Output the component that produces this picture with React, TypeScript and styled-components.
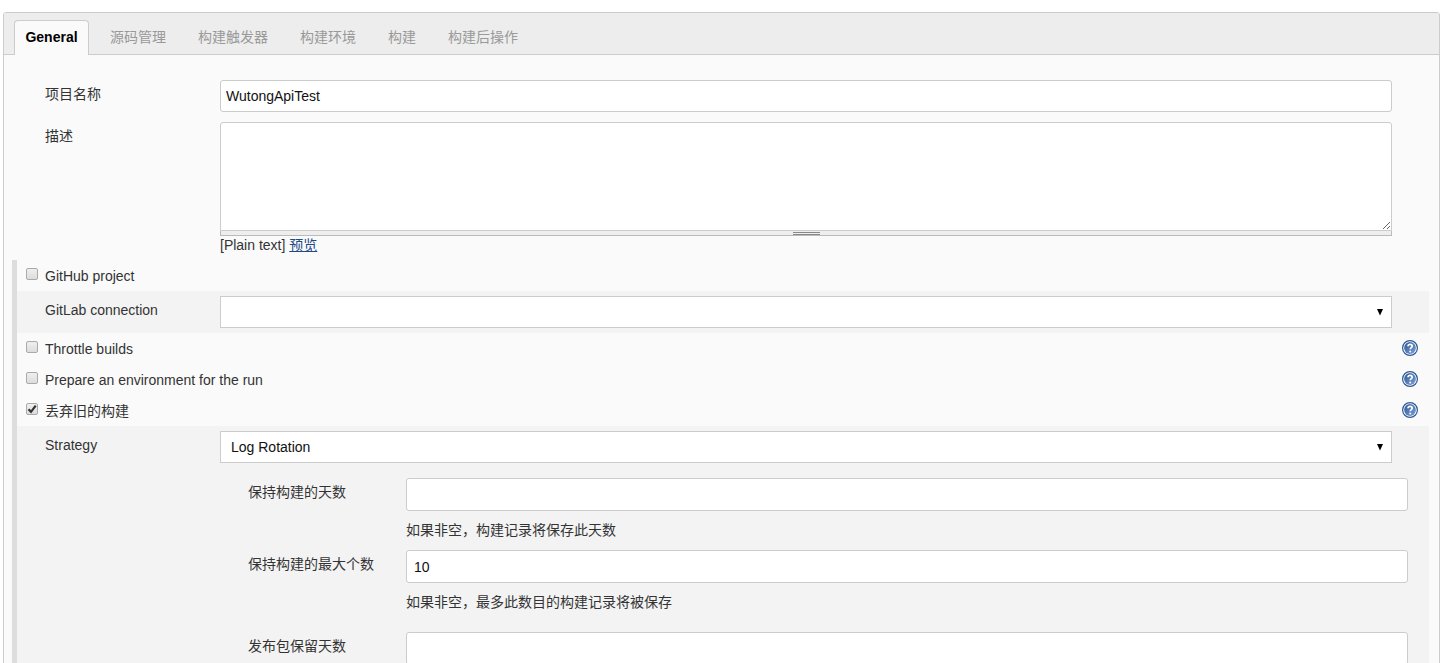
import React, { useId, useState } from "react";
import styled, { createGlobalStyle, css } from "styled-components";

const GlobalStyle = createGlobalStyle`
  *, *::before, *::after { box-sizing: border-box; }
  body { margin: 0; background: #fff; }
  body, button, input, textarea, select {
    font-family: "Liberation Sans", "Noto Sans CJK SC", sans-serif;
    font-size: 14px;
    line-height: 20px;
    color: #333;
  }
`;

const Page = styled.main`
  height: 100vh;
  overflow: hidden;
  padding: 12px 5px 0 3px;
`;

const Panel = styled.form`
  border: 1px solid #ccc;
  border-radius: 3px;
  background: #fafafa;
`;

const TabBar = styled.div`
  display: flex;
  align-items: flex-end;
  height: 42px;
  padding-left: 10px;
  border-bottom: 1px solid #ccc;
  border-radius: 2px 2px 0 0;
  background: #ededed;
`;

const Tab = styled.button<{ $active: boolean }>`
  height: 35px;
  margin-bottom: -1px;
  padding: 0 10px 3px;
  margin-right: 10px;
  border: 1px solid transparent;
  border-bottom: 0;
  border-radius: 4px 4px 0 0;
  background: transparent;
  color: #999;
  white-space: nowrap;
  ${(p) =>
    p.$active &&
    css`
      min-width: 75px;
      border-color: #ccc;
      background: #fafafa;
      color: #000;
      font-weight: bold;
    `}
`;

const Section = styled.section<{ $bar?: boolean }>`
  margin: 0 10px 0 8px;
  border-left: 5px solid ${(p) => (p.$bar ? "#ddd" : "transparent")};
`;

const Intro = styled(Section)`
  padding: 25px 0 6px;
  display: grid;
  row-gap: 10px;
`;

const SettingRow = styled.div<{ $shaded?: boolean }>`
  display: grid;
  grid-template-columns: 175px 1fr;
  padding: ${(p) => (p.$shaded ? "5px 37px 5px 28px" : "0 37px 0 28px")};
  background: ${(p) => (p.$shaded ? "#f3f3f3" : "transparent")};
`;

const Label = styled.label`
  padding-top: 4px;
`;

const TextInput = styled.input<{ $roomy?: boolean }>`
  display: block;
  width: 100%;
  height: ${(p) => (p.$roomy ? "33px" : "32px")};
  padding: 0 ${(p) => (p.$roomy ? "7px" : "5px")};
  border: 1px solid #ccc;
  border-radius: 3px;
  background: #fff;
  color: #111;
`;

const TextArea = styled.textarea`
  display: block;
  width: 100%;
  height: 109px;
  padding: 5px;
  border: 1px solid #ccc;
  border-radius: 3px 3px 0 0;
  background: #fff;
  resize: vertical;
`;

const Handle = styled.div`
  display: flex;
  justify-content: center;
  height: 5px;
  border: 1px solid #bbb;
  border-top: 0;
  background: #eee;
`;

const Grip = styled.span`
  width: 27px;
  height: 3px;
  margin-top: 1px;
  border: solid #888;
  border-width: 1px 0;
`;

const Format = styled.div`
  line-height: 18px;
`;

const Link = styled.a`
  color: #204a87;
  text-decoration: underline;
`;

const SelectBox = styled.div`
  position: relative;
`;

const Select = styled.select`
  display: block;
  width: 100%;
  height: 32px;
  padding: 0 24px 0 10px;
  border: 1px solid #ccc;
  border-radius: 0;
  background: #fff;
  color: #111;
  appearance: none;
`;

const Arrow = styled.svg`
  position: absolute;
  right: 9px;
  top: 12px;
  pointer-events: none;
`;

const OptionRow = styled.div`
  display: flex;
  align-items: flex-start;
  justify-content: space-between;
  height: 31px;
  padding: 6px 11px 0 9px;
`;

const OptionLabel = styled.label`
  display: flex;
  align-items: flex-start;
  gap: 7px;
`;

const Checkbox = styled.input`
  appearance: none;
  width: 12px;
  height: 12px;
  margin: 2px 0 0;
  border: 1px solid #aaa;
  border-radius: 2px;
  background: linear-gradient(#efefef, #dcdcdc);
  &:checked {
    background: url("data:image/svg+xml,%3Csvg xmlns='http://www.w3.org/2000/svg' viewBox='0 0 10 10'%3E%3Cpath d='M1.5 5.2 4 7.8 8.7 1.6' fill='none' stroke='%23333' stroke-width='2.2'/%3E%3C/svg%3E"),
      linear-gradient(#efefef, #dcdcdc);
  }
`;

const HelpButton = styled.button`
  width: 16px;
  height: 16px;
  margin-top: 1px;
  padding: 0;
  border: 0;
  background: none;
  svg { display: block; }
`;

const Nested = styled.div`
  display: grid;
  padding: 10px 21px 0 231px;
  background: #f3f3f3;
`;

const NestedRow = styled.div<{ $tall?: boolean }>`
  display: grid;
  grid-template-columns: 158px 1fr;
  align-content: start;
  height: ${(p) => (p.$tall ? "82px" : "72px")};
`;

const Hint = styled.p`
  margin: 9px 0 0;
`;

const tabs = ["General", "源码管理", "构建触发器", "构建环境", "构建", "构建后操作"];

function HelpIcon() {
  const id = useId();
  return (
    <svg width="16" height="16" viewBox="0 0 16 16" aria-hidden="true">
      <defs>
        <linearGradient id={id} x1="0" y1="0" x2="1" y2="1">
          <stop offset="0" stopColor="#2f5797" />
          <stop offset="1" stopColor="#7ba3d6" />
        </linearGradient>
      </defs>
      <circle cx="8" cy="8" r="7.4" fill="#fff" stroke="#2e5795" strokeWidth="1.2" />
      <circle cx="8" cy="8" r="5.9" fill={`url(#${id})`} />
      <path
        d="M6 6.2C6 5 6.9 4.4 8.1 4.4s2.1.7 2.1 1.8c0 1.4-2 1.5-2 3.1"
        fill="none"
        stroke="#fff"
        strokeWidth="1.7"
      />
      <circle cx="8.2" cy="11.4" r="1" fill="#fff" />
    </svg>
  );
}

function Dropdown({ id, options }: { id: string; options: string[] }) {
  return (
    <SelectBox>
      <Select id={id}>
        {options.map((o) => (
          <option key={o}>{o}</option>
        ))}
      </Select>
      <Arrow width="6" height="8" viewBox="0 0 6 8" aria-hidden="true">
        <path d="M0 1h6L3 7.5z" fill="#000" />
      </Arrow>
    </SelectBox>
  );
}

function Option({ text, checked, help }: { text: string; checked?: boolean; help?: boolean }) {
  return (
    <OptionRow>
      <OptionLabel>
        <Checkbox type="checkbox" defaultChecked={checked} />
        {text}
      </OptionLabel>
      {help && (
        <HelpButton type="button" aria-label={`Help for ${text}`}>
          <HelpIcon />
        </HelpButton>
      )}
    </OptionRow>
  );
}

export default function App() {
  const [active, setActive] = useState(tabs[0]);
  return (
    <Page>
      <GlobalStyle />
      <Panel>
        <TabBar role="tablist">
          {tabs.map((t) => (
            <Tab
              key={t}
              type="button"
              role="tab"
              aria-selected={t === active}
              $active={t === active}
              onClick={() => setActive(t)}
            >
              {t}
            </Tab>
          ))}
        </TabBar>

        <Intro>
          <SettingRow>
            <Label htmlFor="name">项目名称</Label>
            <TextInput id="name" defaultValue="WutongApiTest" />
          </SettingRow>
          <SettingRow>
            <Label htmlFor="description">描述</Label>
            <div>
              <TextArea id="description" />
              <Handle>
                <Grip />
              </Handle>
              <Format>
                [Plain text] <Link href="#preview">预览</Link>
              </Format>
            </div>
          </SettingRow>
        </Intro>

        <Section $bar>
          <Option text="GitHub project" />
          <SettingRow $shaded>
            <Label htmlFor="gitlab">GitLab connection</Label>
            <Dropdown id="gitlab" options={[""]} />
          </SettingRow>
          <Option text="Throttle builds" help />
          <Option text="Prepare an environment for the run" help />
          <Option text="丢弃旧的构建" checked help />
          <SettingRow $shaded>
            <Label htmlFor="strategy">Strategy</Label>
            <Dropdown id="strategy" options={["Log Rotation"]} />
          </SettingRow>
          <Nested>
            <NestedRow>
              <Label htmlFor="days">保持构建的天数</Label>
              <div>
                <TextInput id="days" $roomy />
                <Hint>如果非空，构建记录将保存此天数</Hint>
              </div>
            </NestedRow>
            <NestedRow $tall>
              <Label htmlFor="count">保持构建的最大个数</Label>
              <div>
                <TextInput id="count" $roomy defaultValue="10" />
                <Hint>如果非空，最多此数目的构建记录将被保存</Hint>
              </div>
            </NestedRow>
            <NestedRow>
              <Label htmlFor="artifactDays">发布包保留天数</Label>
              <div>
                <TextInput id="artifactDays" $roomy />
              </div>
            </NestedRow>
          </Nested>
        </Section>
      </Panel>
    </Page>
  );
}
